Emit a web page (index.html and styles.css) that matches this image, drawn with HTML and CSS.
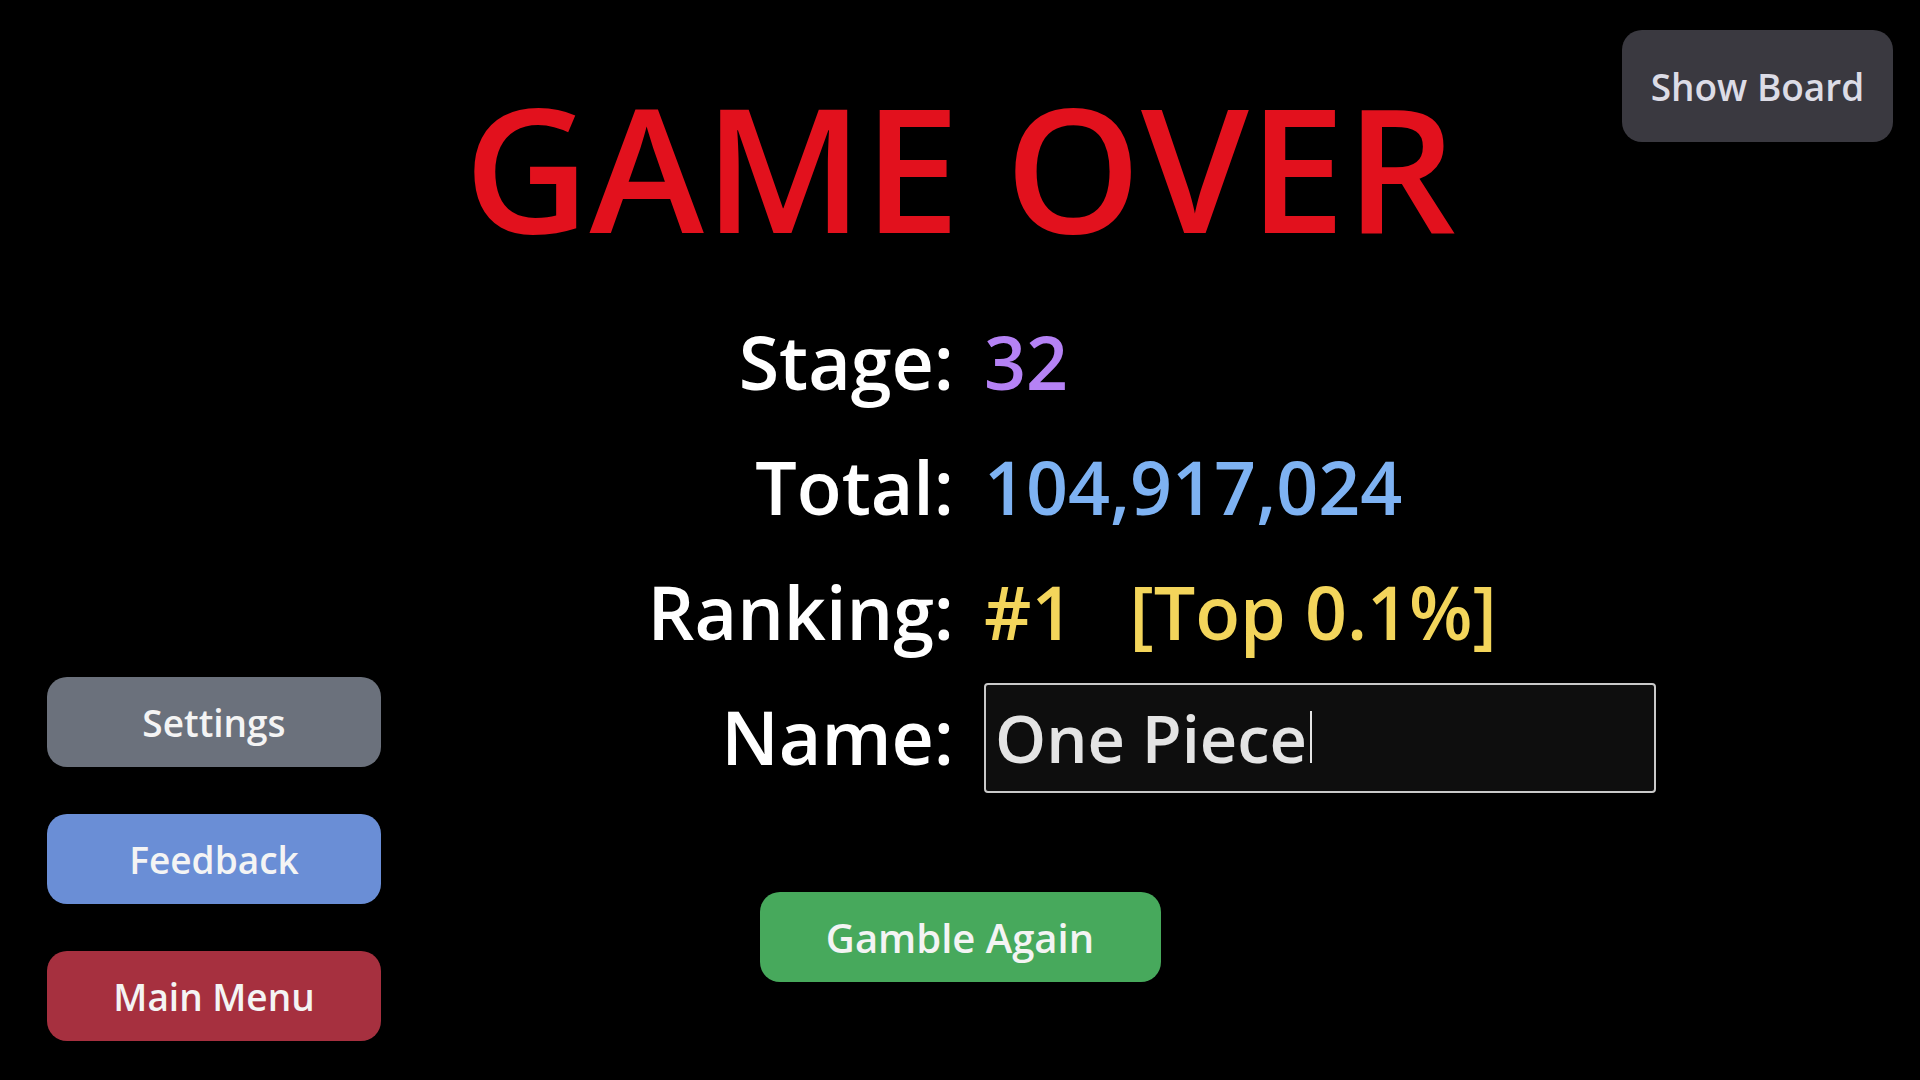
FILE: index.html
```html
<!DOCTYPE html>
<html>

<head>
    <title>Game Over</title>
    <link rel="stylesheet" href="styles.css">
</head>

<body>
    <div id="screen">

        <div id="result">
            <div id="title">GAME OVER</div>

            <div id="stats">
                <div class="label">Stage:</div>
                <div class="value stage">32</div>

                <div class="label">Total:</div>
                <div class="value total">104,917,024</div>

                <div class="label">Ranking:</div>
                <div class="value rank">#1<span class="percent">[Top 0.1%]</span></div>

                <div class="label">Name:</div>
                <div class="value">
                    <div id="name" role="textbox">One Piece<span class="caret"></span></div>
                </div>
            </div>

            <button class="btn again">Gamble Again</button>
        </div>

        <div id="side">
            <button class="btn side settings">Settings</button>
            <button class="btn side feedback">Feedback</button>
            <button class="btn side menu">Main Menu</button>
        </div>

        <button class="btn board">Show Board</button>

    </div>
</body>

</html>
```

FILE: styles.css
```css
html,
body {
    margin: 0;
    background-color: #000;
    font-family: "Open Sans", "Noto Sans", sans-serif;
    color: #fff;
}

#screen {
    display: grid;
    width: 1920px;
    height: 1080px;
}

/* all three blocks share the one cell and are placed by alignment */
#screen > * {
    grid-area: 1 / 1;
}

#result {
    justify-self: center;
    display: flex;
    flex-direction: column;
    align-items: center;
    padding-top: 80px;
}

#title {
    font-size: 173px;
    font-weight: 600;
    line-height: 1;
    color: #e2111d;
}

#stats {
    display: grid;
    grid-template-columns: 690px 672px;
    grid-auto-rows: 125px;
    column-gap: 30px;
    align-items: center;
    margin-top: 46px;
    font-size: 73.5px;
    font-weight: 600;
    line-height: 125px;
}

.label {
    text-align: right;
}

.stage {
    color: #b582f5;
}

.total {
    color: #7eb2f2;
}

.rank {
    color: #f3d55b;
}

.percent {
    margin-left: 56px;
}

#name {
    box-sizing: border-box;
    width: 672px;
    height: 110px;
    margin-top: 2px;
    padding-left: 9px;
    border: solid #c9c9c9 2px;
    border-radius: 4px;
    background-color: #0e0e0e;
    color: #e4e4e4;
    font-size: 65px;
    font-weight: 600;
    line-height: 106px;
    white-space: nowrap;
}

.caret {
    display: inline-block;
    width: 2px;
    height: 52px;
    margin-left: 3px;
    background-color: #e4e4e4;
}

.btn {
    border: none;
    border-radius: 20px;
    font-family: "Open Sans", "Noto Sans", sans-serif;
    font-size: 37px;
    font-weight: 600;
    color: #f4f4f4;
    padding: 0;
}

.again {
    width: 401px;
    height: 90px;
    margin-top: 93px;
    font-size: 40px;
    background-color: #47a95c;
}

#side {
    justify-self: start;
    align-self: end;
    display: flex;
    flex-direction: column;
    gap: 47px;
    padding: 0 0 39px 47px;
}

.side {
    width: 334px;
    height: 90px;
}

.settings {
    background-color: #6b717c;
}

.feedback {
    background-color: #6a8ed6;
}

.menu {
    background-color: #a6303f;
}

.board {
    justify-self: end;
    align-self: start;
    width: 271px;
    height: 112px;
    margin: 30px 27px 0 0;
    background-color: #3a3940;
    color: #dcdce6;
}
```
